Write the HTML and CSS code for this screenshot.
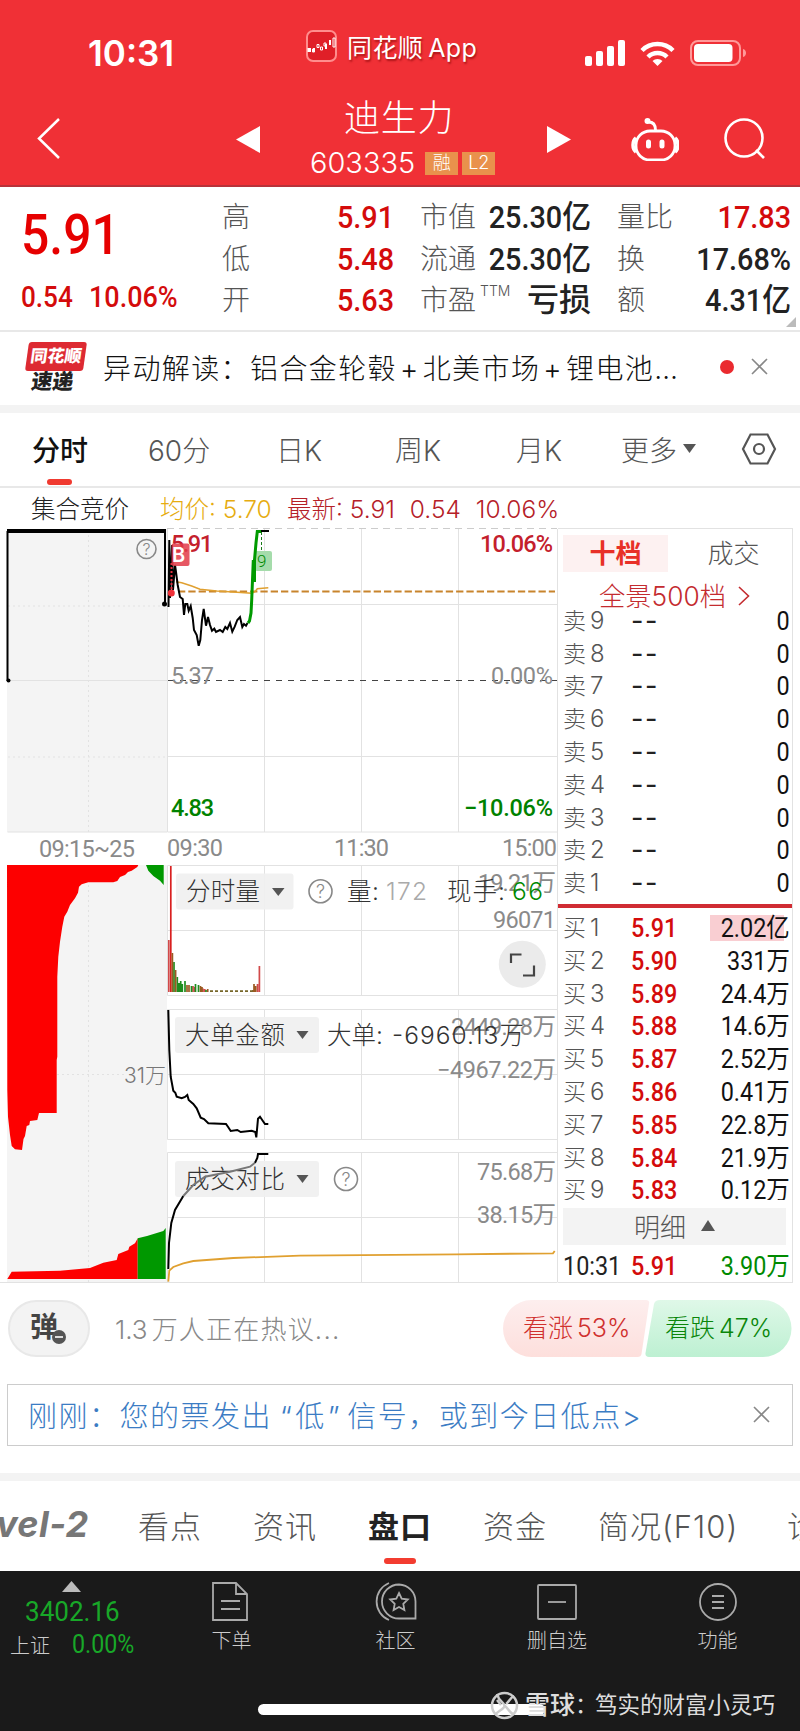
FILE: index.html
```
<!DOCTYPE html>
<html lang="zh-CN">

<head>
    <meta charset="utf-8">
    <title>迪生力 603335</title>
    <link rel="stylesheet" href="styles.css">
</head>

<body>
    <div class="header">
        <div class="status">
            <span class="time">10:31</span>
            <svg class="app-logo" width="32" height="32" viewBox="0 0 32 32">
                <rect x="1" y="1" width="29" height="30" rx="6" fill="#e01f28" stroke="#ff8d8d" stroke-width="2"/>
                <path d="M2.5 18v4M4 18v4M8 18v4M20 14v5M24 10v5" stroke="#fff" stroke-width="2"/>
                <path d="M6.500 19h2v3h-2zM11 14.500h2v3h-2zM14.500 17h2v3h-2zM18 13h2v3h-2zM27 8h2v9h-2z" stroke="#fff" fill="none"/>
            </svg>
            <span class="app-name">同花顺<span>App</span></span>
            <svg class="signals" width="164" height="30" viewBox="584 38 164 30">
                <g fill="#fff">
                    <rect x="585" y="56" width="7" height="10" rx="2"/>
                    <rect x="596" y="51" width="7" height="15" rx="2"/>
                    <rect x="607" y="46" width="7" height="20" rx="2"/>
                    <rect x="618" y="40" width="7" height="26" rx="2"/>
                    <path d="M657.500 66l-5-5a7 7 0 0 1 10 0z"/>
                </g>
                <g fill="none" stroke="#fff" stroke-width="4.500">
                    <path d="M642 50.500a22 22 0 0 1 31 0"/>
                    <path d="M648 57a13.500 13.500 0 0 1 19 0"/>
                </g>
                <rect x="691" y="41" width="49" height="24" rx="7" fill="none" stroke="#f99" stroke-width="2"/>
                <rect x="694" y="44" width="38.500" height="18" rx="4" fill="#fff"/>
                <path d="M743 49c4 1 4 7 0 8z" fill="#f99"/>
            </svg>
        </div>
        <div class="nav">
            <svg width="24" height="42" viewBox="0 0 24 42" fill="none" stroke="#fff" stroke-width="2.500"><path d="M22 1L2 20.500L22 40"/></svg>
            <svg width="24" height="27" viewBox="0 0 24 27" fill="#fff"><path d="M24 0v27L0 13.500z"/></svg>
            <div class="stock">
                <div class="stock-name">迪生力</div>
                <div class="stock-code">603335<i>融</i><i>L2</i></div>
            </div>
            <svg width="24" height="27" viewBox="0 0 24 27" fill="#fff"><path d="M0 0v27l24-13.500z"/></svg>
            <svg width="48" height="44" viewBox="630 118 48 44" fill="none" stroke="#fff" stroke-width="2.800">
                <rect x="635" y="132" width="39" height="29" rx="14"/>
                <path d="M654.500 131c0-5-2-8-7-8"/>
                <circle cx="646.500" cy="122" r="2" fill="#fff" stroke-width="2"/>
                <path d="M635 139c-4 3-4 11 0 14M674 139c4 3 4 11 0 14" stroke-width="3.500"/>
                <path d="M647.500 143v4M661 143v4" stroke-width="5" stroke-linecap="round"/>
            </svg>
            <svg width="42" height="42" viewBox="0 0 42 42" fill="none" stroke="#fff" stroke-width="2.600"><circle cx="20" cy="20" r="18.500"/><path d="M32 32l8 8"/></svg>
        </div>
    </div>

    <div class="quote">
        <div class="quote-main">
            <div class="price din">5.91</div>
            <div class="change"><span class="din">0.54</span><span class="din">10.06%</span></div>
        </div>
        <dl>
            <dt>高</dt><dd class="din red">5.91</dd>
            <dt>低</dt><dd class="din red">5.48</dd>
            <dt>开</dt><dd class="din red">5.63</dd>
        </dl>
        <dl>
            <dt>市值</dt><dd class="din">25.30亿</dd>
            <dt>流通</dt><dd class="din">25.30亿</dd>
            <dt>市盈<sup>TTM</sup></dt><dd>亏损</dd>
        </dl>
        <dl>
            <dt>量比</dt><dd class="din red">17.83</dd>
            <dt>换</dt><dd class="din">17.68%</dd>
            <dt>额</dt><dd class="din">4.31亿</dd>
        </dl>
        <b class="corner"></b>
    </div>

    <div class="news">
        <div class="news-logo"><b>同花顺</b><em>速递</em></div>
        <div class="news-text">异动解读：铝合金轮毂<s>+</s>北美市场<s>+</s>锂电池…</div>
        <b class="dot"></b>
        <svg class="close" width="17" height="17" viewBox="0 0 17 17"><path d="M1 1l15 15M16 1L1 16"/></svg>
    </div>

    <div class="periods">
        <span class="on">分时</span>
        <span>60分</span>
        <span>日K</span>
        <span>周K</span>
        <span>月K</span>
        <span>更多<svg width="13" height="9" viewBox="0 0 13 9"><path d="M0 0h13L6.500 9z" fill="#555"/></svg></span>
        <svg class="gear" width="36" height="32" viewBox="0 0 36 32" fill="none" stroke="#555" stroke-width="2.200"><path d="M9.500 1.500h17L34 16l-7.500 14.500h-17L2 16z"/><circle cx="18" cy="16" r="5"/></svg>
    </div>

    <div class="legend">
        <span>集合竞价</span>
        <span class="avg">均价: 5.70</span>
        <span class="last">最新: 5.91</span>
        <span class="last">0.54</span>
        <span class="last">10.06%</span>
    </div>

    <div class="board">
        <svg class="chart" width="558" height="755" viewBox="0 528 558 755">
            <!-- 集合竞价 -->
            <rect x="7" y="529" width="160" height="303" fill="#f4f4f4"/>
            <rect x="7" y="865" width="160" height="417" fill="#f4f4f4"/>
            <g class="grid" stroke-dasharray="2 3">
                <path d="M88.500 535V832M88.500 865V1282M8 606H167M8 757H167M57 1074.500H124"/>
            </g>
            <path class="grid" d="M8 680.500H167M7.500 832H167"/>
            <path d="M7.500 681V531" class="line"/>
            <path d="M7 531H166" stroke="#000" stroke-width="4"/>
            <path d="M165 531V604" class="line"/>
            <circle cx="164.500" cy="604" r="2.500"/>
            <circle cx="8.500" cy="680.500" r="2"/>
            <g class="help">
                <circle cx="146.500" cy="549" r="9.500"/>
                <text x="146.500" y="555" font-size="16">?</text>
            </g>
            <path fill="#fd0000" d="M7 865H138.300L137.300 867L131.700 870.700L128 872L125 875L120 877L117.300 881L113.300 882.300H88.300L81.700 884.300L79 886.700L78 892.700L75 898.300L70 905L67.300 911.700L64.300 916.700L62.300 926.700L60 941.700L58.300 956.700L57.300 976.700V1056.700L56.700 1060V1113H39L37.300 1120L30 1121L29.300 1125L26.700 1126L25 1136L23.500 1139L22 1150L15 1149.300L11.700 1146L10 1135L8 1116.700L7.300 1090z"/>
            <path fill="#009800" d="M146 865H163.700V885L160 880.700L153.300 876L148.300 870.700z"/>
            <path fill="#fd0000" d="M7.300 1279L11.700 1271.700L60 1270.700L90 1268L103.300 1262.700L116.700 1260L118.300 1254L128.300 1250L129.300 1246.700L135 1243.300L137.700 1238.300V1279z"/>
            <path fill="#009800" d="M137.700 1279V1238.300L147 1236L163.300 1231L165.700 1228V1279z"/>
            <text class="axis" x="124" y="1083" font-size="21" textLength="42">31万</text>

            <!-- 分时走势 -->
            <path class="grid" d="M167.500 529V832H557.500M167.500 604.500H557.500M167.500 756.500H557.500M264.500 529V832M361.500 529V832M458.500 529V832M557.500 529V1282"/>
            <path d="M167 528.500H557" stroke="#ccc" stroke-dasharray="7 5"/>
            <path d="M168 680.500H557" stroke="#444" stroke-dasharray="6 6"/>
            <path d="M178 591.500H555" stroke="#c8842c" stroke-width="1.800" stroke-dasharray="7.300 3"/>
            <text class="num r" x="171" y="552" textLength="42">5.91</text>
            <text class="num r end" x="553" y="552" textLength="73">10.06%</text>
            <text class="num g" x="171" y="816" textLength="43">4.83</text>
            <text class="num g end" x="553" y="816" textLength="89">−10.06%</text>
            <text class="num" x="171" y="684" textLength="43">5.37</text>
            <text class="num end" x="553" y="684" textLength="62">0.00%</text>
            <path fill="none" stroke="#e0a030" stroke-width="1.500" d="M176 581.700L181.700 582.700L191.700 586L200 589.300L216.700 591L233.300 592L251.700 593.300L255 591.700L257.300 588.700L268.300 587.700"/>
            <path class="line" d="M168.500 607L169.300 540L170 598L172 545L173 590L175 565L176 572L177.700 585L180 597L182.700 599L184 615L185.300 604H187.300L188.700 610.700L190.700 606L192.700 618L194 630L196.700 635L198.700 645.700L200.300 640L202 620L203.700 609L206 625.700L208 617L210 625L212 630.700L214.300 628.700L216 632L220 630L222.700 632L225.300 627L227.300 629L230 623L232.300 631.700L234.700 626.700L237.300 620L240 617L242.300 627L244 624L246 625.700L247.500 623"/>
            <path d="M257 531H269" class="line"/>
            <rect x="255" y="551" width="17" height="20" rx="2" fill="#a5dcab"/>
            <path d="M261.500 532V552" stroke="#187a18" stroke-dasharray="3 2"/>
            <path fill="none" stroke="#009a00" stroke-width="3" d="M248 623L249.500 621L251 613L251.700 600L253.300 560L254.500 582V560L256 543L257.300 531.500H261"/>
            <text x="257" y="567" class="tag" fill="#008a00">9</text>
            <path d="M171.500 563V590" stroke="#e03040" stroke-width="2" stroke-dasharray="2 2"/>
            <circle cx="171.300" cy="593" r="3.500" fill="#f03038"/>
            <rect x="171.500" y="543.500" width="18" height="22.500" rx="2" fill="#e23a48" fill-opacity=".85"/>
            <text x="172" y="562" font-size="20" font-weight="600" fill="#fff">B</text>
            <text class="num" x="39" y="857" textLength="96">09:15~25</text>
            <text class="num" x="167" y="856" textLength="56">09:30</text>
            <text class="num" x="334" y="856" textLength="55">11:30</text>
            <text class="num end" x="557" y="856" textLength="55">15:00</text>

            <!-- 分时量 -->
            <path class="grid" d="M167.500 995.500V865.500H557.500M167.500 930.500H557.500M167.500 995.500H557.500M264.500 865V995M361.500 865V995M458.500 865V995"/>
            <g stroke-width="1.700">
                <path stroke="#d14a4a" d="M168.800 992V940M193 992V986M194.800 992V987M203 992V988.500M204.800 992V989M257.500 992V984M259.400 992V966"/>
                <path stroke="#d81f1f" d="M170.800 992V866"/>
                <path stroke="#1f8e1f" d="M174 992V962M177.300 992V977M179 992V983M180.700 992V981M182.300 992V984M185 992V981M191.500 992V986M195.500 992V984M198.500 992V985M206 992V990"/>
                <path stroke="#9a5a22" d="M172.400 992V953M175.600 992V970M187 992V985M189 992V985M200.500 992V986M202 992V987M207.700 992V989M254 992V984M255.700 992V986M253 992V990"/>
                <path stroke="#77672a" d="M210 991.200H253" stroke-dasharray="3 2"/>
            </g>
            <text class="num end" x="556" y="891" textLength="78">19.21万</text>
            <text class="num end" x="556" y="928" textLength="63">96071</text>
            <rect class="btn" x="176" y="873.500" width="117.500" height="36" rx="3"/>
            <text class="name" x="186" y="900" textLength="74">分时量</text>
            <path d="M272 888h12.500l-6.250 8z" fill="#555"/>
            <g class="help">
                <circle cx="320.500" cy="891.300" r="11.500"/>
                <text x="320.500" y="898" font-size="18">?</text>
            </g>
            <text class="name" x="347" y="900" textLength="32">量:</text>
            <text class="name pale" x="386" y="900" textLength="41">172</text>
            <text class="name" x="447" y="900" textLength="58">现手:</text>
            <text class="name now" x="512" y="900" textLength="31">66</text>
            <circle cx="522.300" cy="964.300" r="23.500" fill="#ebebeb"/>
            <path d="M511 963V954.500H521.500M534 965.500V975.500H523" fill="none" stroke="#444" stroke-width="2.200"/>

            <!-- 大单金额 -->
            <path class="grid" d="M167.500 1139.500V1009.500H557.500M167.500 1074.500H557.500M167.500 1139.500H557.500M264.500 1009V1139M361.500 1009V1139M458.500 1009V1139"/>
            <text class="num end" x="556" y="1035" textLength="105">2449.28万</text>
            <text class="num end" x="556" y="1078" textLength="119">−4967.22万</text>
            <rect class="btn" x="175" y="1017" width="144" height="36" rx="3"/>
            <text class="name" x="185" y="1044" textLength="100">大单金额</text>
            <path d="M296.500 1031h12l-6 8z" fill="#555"/>
            <text class="name" x="327" y="1044" textLength="56">大单:</text>
            <text class="name" x="392" y="1044" textLength="132">-6960.13万</text>
            <path class="line" d="M168.300 1010L169.300 1050L170.700 1076.700L173.300 1090.700L175.300 1092.700L176.700 1096.700L181.700 1098.300L185 1097L187.300 1095L188.700 1100L193.300 1104L196.700 1108.300L200.700 1117.700L204 1119L208.300 1123.300L226 1124L228.300 1127.300L230.700 1131L237.300 1130L240.700 1132L251.700 1130.700L255.300 1132L256.300 1137.300L258 1118.700L260 1116.700L262.700 1120.700L265 1124H268.300"/>

            <!-- 成交对比 -->
            <path class="grid" d="M167.500 1282.500V1152.500H557.500M167.500 1217.500H557.500M0 1282.500H557.500M264.500 1152V1282M361.500 1152V1282M458.500 1152V1282"/>
            <text class="num end" x="556" y="1180" textLength="79">75.68万</text>
            <text class="num end" x="556" y="1223" textLength="79">38.15万</text>
            <rect class="btn" x="175" y="1161" width="144" height="36" rx="3"/>
            <text class="name" x="185" y="1188" textLength="100">成交对比</text>
            <path class="line" d="M168.300 1269L169 1243L171.300 1223L175 1210L183.300 1196"/>
            <path class="line faded" d="M183.300 1196L193.300 1185L205 1176.700L230 1171.700L250 1166.700L255 1162.700"/>
            <path class="line" d="M255 1162.700L257.300 1158L258 1154H268.300"/>
            <path d="M296.500 1175h12l-6 8z" fill="#555"/>
            <g class="help">
                <circle cx="346" cy="1179" r="11.500"/>
                <text x="346" y="1186" font-size="18">?</text>
            </g>
            <path fill="none" stroke="#e0a030" stroke-width="1.800" d="M168.300 1281.700L169.300 1270.700L173.300 1267L183.300 1263.300L193.300 1261L233.300 1258L300 1255.700L456 1254.300L553 1253.300L554.700 1251"/>
        </svg>

        <div class="book">
            <div class="book-tabs"><span class="on">十档</span><span>成交</span></div>
            <div class="book-full">全景500档<svg width="12" height="20" viewBox="0 0 12 20"><path d="M1 1l9.500 9L1 19" fill="none" stroke="#c42b2f" stroke-width="1.600"/></svg></div>
            <ul class="sell">
                <li><span>卖</span><span>9</span><b>--</b><em class="din">0</em></li>
                <li><span>卖</span><span>8</span><b>--</b><em class="din">0</em></li>
                <li><span>卖</span><span>7</span><b>--</b><em class="din">0</em></li>
                <li><span>卖</span><span>6</span><b>--</b><em class="din">0</em></li>
                <li><span>卖</span><span>5</span><b>--</b><em class="din">0</em></li>
                <li><span>卖</span><span>4</span><b>--</b><em class="din">0</em></li>
                <li><span>卖</span><span>3</span><b>--</b><em class="din">0</em></li>
                <li><span>卖</span><span>2</span><b>--</b><em class="din">0</em></li>
                <li><span>卖</span><span>1</span><b>--</b><em class="din">0</em></li>
            </ul>
            <ul class="buy">
                <li class="first"><span>买</span><span>1</span><b class="din">5.91</b><em class="din">2.02亿</em></li>
                <li><span>买</span><span>2</span><b class="din">5.90</b><em class="din">331万</em></li>
                <li><span>买</span><span>3</span><b class="din">5.89</b><em class="din">24.4万</em></li>
                <li><span>买</span><span>4</span><b class="din">5.88</b><em class="din">14.6万</em></li>
                <li><span>买</span><span>5</span><b class="din">5.87</b><em class="din">2.52万</em></li>
                <li><span>买</span><span>6</span><b class="din">5.86</b><em class="din">0.41万</em></li>
                <li><span>买</span><span>7</span><b class="din">5.85</b><em class="din">22.8万</em></li>
                <li><span>买</span><span>8</span><b class="din">5.84</b><em class="din">21.9万</em></li>
                <li><span>买</span><span>9</span><b class="din">5.83</b><em class="din">0.12万</em></li>
            </ul>
            <div class="detail">明细<svg width="14" height="11" viewBox="0 0 14 11"><path d="M0 11h14L7 0z" fill="#555"/></svg></div>
            <div class="trade"><span class="din">10:31</span><b class="din">5.91</b><em class="din">3.90万</em></div>
        </div>
    </div>

    <div class="talk">
        <div class="danmu">弹<svg width="16" height="16" viewBox="0 0 16 16"><circle cx="8" cy="8" r="7" fill="#555"/><path d="M4 8h8" stroke="#fff" stroke-width="1.600"/></svg></div>
        <div class="talk-text">1.3<span>万人正在热议...</span></div>
        <div class="vote">
            <svg width="289" height="58" viewBox="0 0 289 58">
                <defs>
                    <linearGradient id="up" x2="0" y2="1"><stop stop-color="#fdeeee"/><stop offset="1" stop-color="#fddfdc"/></linearGradient>
                    <linearGradient id="down" x2="0" y2="1"><stop stop-color="#dff8e8"/><stop offset="1" stop-color="#bdf0d2"/></linearGradient>
                </defs>
                <path d="M28.500 0H143q4 0 3 4L138.500 54q-.5 3-4 3H28.500a28.500 28.500 0 0 1 0-57z" fill="url(#up)"/>
                <path d="M157 0H260a28.500 28.500 0 0 1 0 57H146q-4 0-3.500-4L151 4q1-4 6-4z" fill="url(#down)"/>
            </svg>
            <span class="up">看涨<i>53%</i></span>
            <span class="down">看跌<i>47%</i></span>
        </div>
    </div>

    <div class="alert">
        <span>刚刚：您的票发出<q class="open">“</q>低<q>”</q>信号，或到今日低点&gt;</span>
        <svg class="close" width="17" height="17" viewBox="0 0 17 17"><path d="M1 1l15 15M16 1L1 16"/></svg>
    </div>

    <div class="sections">
        <span class="level">vel-2</span>
        <span>看点</span>
        <span>资讯</span>
        <span class="on">盘口</span>
        <span>资金</span>
        <span>简况(F10)</span>
        <span>诊</span>
    </div>

    <div class="footer">
        <div class="index">
            <svg width="19" height="11" viewBox="0 0 19 11"><path d="M0 11h19L9.500 0z" fill="#bbb"/></svg>
            <div class="index-num din">3402.16</div>
            <div class="index-name">上证<span class="din">0.00%</span></div>
        </div>
        <div class="tool order">
            <svg width="36" height="39" viewBox="0 0 36 39"><path d="M1 1h23l11 11v26H1zM24 1v11h11M9 19h19M9 27h19"/></svg>
            <span>下单</span>
        </div>
        <div class="tool">
            <svg width="42" height="39" viewBox="0 0 42 39"><path d="M24 2.500a17 17 0 1 0 0 34h16.500v-17A17 17 0 0 0 24 2.500zM14 1a20 20 0 0 0 0 37M24 11l2.700 5.700 6.100.8-4.500 4.300 1.100 6.200-5.400-3-5.400 3 1.100-6.200-4.500-4.300 6.100-.8z"/></svg>
            <span>社区</span>
        </div>
        <div class="tool remove">
            <svg width="40" height="39" viewBox="0 0 40 39"><rect x="1" y="3" width="38" height="34" rx="1"/><path d="M11 20h18"/></svg>
            <span>删自选</span>
        </div>
        <div class="tool">
            <svg width="38" height="39" viewBox="0 0 38 39"><circle cx="19" cy="20" r="18"/><path d="M13 14h12M13 20h12M13 26h12"/></svg>
            <span>功能</span>
        </div>
        <b class="home"></b>
        <div class="mark">
            <svg width="29" height="29" viewBox="0 0 29 29"><circle cx="14.500" cy="14.500" r="12.500"/><path d="M7 3c2 8 7 8 7.500 11.500S7 20 5 24M24 5c-4 2-5 6-8 8M15 15c3 2 4 6 8 8M7 9l4 5"/></svg>
            <span>雪球</span><span>：</span><span>笃实的财富小灵巧</span>
        </div>
    </div>
</body>

</html>
```

FILE: styles.css
```
* {
    box-sizing: border-box;
}

body {
    margin: 0;
    width: 800px;
    background: #fff;
    color: #222;
    font-family: Inter, "Noto Sans CJK SC", sans-serif;
    font-weight: 300;
    overflow-x: hidden;
}

ul,
dl,
dd {
    margin: 0;
    padding: 0;
    list-style: none;
}

i,
em {
    font-style: normal;
}

svg {
    display: block;
    flex: none;
}

/* 窄体数字 */
.din {
    font-family: Roboto, "Noto Sans CJK SC", sans-serif;
    font-weight: 500;
    display: inline-block;
    transform: scaleX(.9);
    transform-origin: left center;
    white-space: nowrap;
}

.red {
    color: #d40b0b;
}

.close {
    fill: none;
    stroke: #888;
    stroke-width: 1.6;
}

/* 顶部 */
.header {
    height: 187px;
    background: #f03036;
    border-bottom: 2px solid #b8323a;
    color: #fff;
}

.status {
    height: 92px;
    display: flex;
    align-items: center;
}

.time {
    flex: none;
    width: 219px;
    padding-left: 1px;
    margin-left: 87px;
    font-size: 35px;
    font-weight: 600;
    padding-top: 14px;
}

.app-name {
    flex: none;
    width: 246px;
    padding-left: 9px;
    font-size: 25px;
    letter-spacing: .4px;
    font-weight: 400;
    text-shadow: 1px 2px 2px rgba(120, 0, 0, .6);
}

.app-name span {
    margin-left: 5px;
}

.signals {
    margin-top: 14px;
}

.nav {
    height: 93px;
    display: grid;
    grid-template-columns: 199px 74px 237px 84px 93px 42px;
    align-items: center;
    padding: 0 0 0 37px;
}

.nav > svg {
    margin-bottom: 6px;
}

.stock {
    padding-bottom: 9px;
    white-space: nowrap;
}

.stock-name {
    font-size: 36px;
    line-height: 50px;
    letter-spacing: .8px;
    padding-left: 34px;
    padding-top: 1px;
}

.stock-code {
    display: flex;
    align-items: center;
    font-size: 29px;
    line-height: 40px;
}

.stock-code i {
    width: 33px;
    height: 23px;
    line-height: 22px;
    margin-left: 4px;
    background: #e9914c;
    font-size: 18px;
    text-align: center;
}

.stock-code i:first-of-type {
    margin-left: 10px;
}

/* 行情 */
.quote {
    position: relative;
    display: grid;
    grid-template-columns: 200px 172px 197px 200px;
    height: 145px;
    padding: 9px 0 0 22px;
    border-bottom: 2px solid #e8e8e8;
}

.quote-main {
    color: #d40b0b;
}

.price {
    margin-left: -1px;
    font-size: 56px;
    line-height: 78px;
    color: #e60000;
    transform: scaleX(.89);
}

.change {
    display: flex;
    margin-left: -1px;
    font-size: 29px;
    line-height: 46px;
}

.change span:first-child {
    width: 68px;
}

.change span:last-child {
    transform: scaleX(.93);
}

.quote dl {
    display: grid;
    grid-template-columns: 54px 1fr;
    grid-auto-rows: 41.5px;
    line-height: 42px;
}

.quote dt {
    font-size: 28px;
    color: #555;
    white-space: nowrap;
}

.quote dd {
    font-size: 32px;
    text-align: right;
    font-weight: 500;
    transform-origin: right center;
}

.quote sup {
    font-size: 14px;
    line-height: 0;
    vertical-align: 14px;
    margin-left: 4px;
}

.quote dl:nth-child(3),
.quote dl:nth-child(4) {
    padding-left: 26px;
}

.corner {
    position: absolute;
    right: 4px;
    bottom: 3px;
    border: 5px solid #bbb;
    border-top-color: transparent;
    border-left-color: transparent;
}

/* 速递 */
.news {
    display: flex;
    align-items: center;
    height: 81px;
    padding: 0 31px 4px 22px;
    border-bottom: 8px solid #f3f3f3;
}

.news-logo {
    width: 81px;
    display: flex;
    flex-direction: column;
    line-height: 20px;
    transform: skewX(-8deg);
    transform-origin: left bottom;
}

.news-logo b {
    width: 58px;
    height: 29px;
    line-height: 28px;
    border-radius: 3px;
    background: #dd2a32;
    color: #fff;
    font-size: 17px;
    font-weight: 900;
    text-align: center;
}

.news-logo em {
    padding: 1px 0 0 8px;
    font-size: 21px;
    font-weight: 900;
}

.news-text {
    width: 617px;
    font-size: 28px;
    letter-spacing: 1.4px;
    color: #111;
    white-space: nowrap;
}

.news-text s {
    text-decoration: none;
    margin: 0 3px;
}

.dot {
    width: 14px;
    height: 14px;
    border-radius: 50%;
    background: #ea2a2f;
    margin-right: 17px;
}

/* 周期 */
.periods {
    display: flex;
    align-items: center;
    height: 75px;
    padding: 0 0 2px 32px;
    border-bottom: 2px solid #e8e8e8;
    font-size: 28px;
    color: #555;
}

.periods span {
    display: flex;
    align-items: center;
    white-space: nowrap;
    width: 119px;
    height: 71px;
}

.periods span:nth-child(1) {
    width: 116px;
}

.periods span:nth-child(2) {
    width: 128px;
}

.periods span:nth-child(4) {
    width: 121px;
}

.periods span:nth-child(5) {
    width: 105px;
}

.periods span:nth-child(6) {
    width: 120px;
}

.periods span svg {
    margin-left: 6px;
}

.periods .on {
    position: relative;
    font-weight: 500;
    color: #111;
}

.periods .on::after {
    content: "";
    position: absolute;
    left: 15px;
    bottom: -1px;
    width: 25px;
    height: 6px;
    border-radius: 3px;
    background: #f03a30;
}

.legend {
    display: flex;
    height: 40px;
    padding: 0 0 0 31px;
    line-height: 42px;
    font-size: 24.5px;
    white-space: nowrap;
}

.legend span {
    width: 129px;
}

.legend .avg {
    width: 127px;
    color: #e6ac10;
}

.legend .last {
    width: auto;
    margin-right: 15px;
    color: #b52028;
}

/* 图表 */
.board {
    display: flex;
}

.grid {
    fill: none;
    stroke: #e2e2e2;
}

.line {
    fill: none;
    stroke: #000;
    stroke-width: 2;
}

.faded {
    stroke: #777;
}

.num {
    font-family: Roboto, "Noto Sans CJK SC", sans-serif;
    font-size: 23.5px;
    font-weight: 400;
    fill: #8a8a8a;
}

.num.r {
    fill: #c4202c;
    font-weight: 500;
}

.num.g {
    fill: #008200;
    font-weight: 500;
}

.end {
    text-anchor: end;
}

.axis {
    fill: #777;
}

.tag {
    font-family: Roboto, sans-serif;
    font-size: 17px;
}

.btn {
    fill: #f0f0f0;
    fill-opacity: .93;
}

.name {
    font-size: 24.5px;
    fill: #333;
}

.pale {
    fill: #aaa;
}

.now {
    fill: #008a00;
}

.help circle {
    fill: none;
    stroke: #888;
    stroke-width: 1.6;
}

.help text {
    fill: #888;
    text-anchor: middle;
}

.book {
    width: 235px;
    height: 755px;
    padding: 6px 5px 0 5px;
    border: 1px solid #e2e2e2;
    border-left: 0;
}

.book-tabs {
    display: flex;
    height: 37px;
    line-height: 37px;
    font-size: 26px;
    color: #555;
    text-align: center;
}

.book-tabs span {
    flex: none;
    width: 105px;
    margin-right: 13px;
}

.book-tabs .on {
    background: #fdf1f1;
    color: #e83028;
    font-weight: 700;
}

.book-full {
    display: flex;
    align-items: center;
    height: 37px;
    padding: 7px 0 0 36px;
    font-size: 26.3px;
    color: #c42b2f;
}

.book-full svg {
    margin: 3px 0 0 12px;
}

.book ul {
    display: flex;
    flex-direction: column;
    height: 291px;
    margin: 0 -5px;
    padding-left: 5px;
    overflow: hidden;
}

.book li {
    flex: none;
    display: grid;
    grid-template-columns: 27px 41px 50px 109px;
    align-items: center;
    height: 32.8px;
    line-height: 32.8px;
    font-size: 24px;
    color: #555;
}

.book li span:first-child {
    font-size: 23px;
}

.book li b {
    font-size: 26px;
    font-weight: 500;
    color: #d40b0b;
}

.book li em {
    justify-self: end;
    font-size: 26px;
    font-weight: 400;
    color: #111;
    transform-origin: right center;
}

.book .sell {
    justify-content: flex-end;
}

.book .sell b {
    color: #222;
    font-size: 27px;
    font-weight: 400;
    letter-spacing: 1.5px;
}

.book .buy {
    height: 296px;
    margin-top: 4px;
    padding-top: 4px;
    border-top: 4px solid #d02c33;
    margin-bottom: 8px;
}

.book .first {
    background: linear-gradient(#f9ced2, #f9ced2) no-repeat 147px 3px / 74px 26px;
}

.detail {
    display: flex;
    align-items: center;
    justify-content: center;
    width: 223px;
    height: 37px;
    background: #f3f3f3;
    font-size: 26px;
    color: #555;
    padding-bottom: 2px;
}

.detail svg {
    margin-left: 15px;
}

.trade {
    display: grid;
    grid-template-columns: 68px 50px 109px;
    line-height: 43px;
    font-size: 26px;
}

.trade .din {
    font-weight: 400;
}

.trade b.din {
    font-weight: 500;
    color: #d40b0b;
}

.trade em {
    justify-self: end;
    color: #008a00;
    transform-origin: right center;
}

/* 热议 */
.talk {
    display: flex;
    align-items: center;
    height: 57px;
    margin-top: 17px;
    padding-left: 8px;
}

.danmu {
    display: flex;
    width: 82px;
    height: 57px;
    padding-left: 20px;
    border: 2px solid #e8e8e8;
    border-radius: 29px;
    background: #f3f3f3;
    font-size: 28px;
    line-height: 50px;
    font-weight: 700;
    color: #444;
}

.danmu svg {
    margin: 27px 0 0 -7px;
}

.talk-text {
    width: 413px;
    padding: 0 0 3px 25px;
    font-size: 26px;
    color: #888;
}

.talk-text span {
    margin-left: 4px;
    letter-spacing: 1.2px;
}

.vote {
    position: relative;
}

.vote span {
    position: absolute;
    top: 0;
    line-height: 57px;
    font-size: 25px;
    white-space: nowrap;
}

.vote i {
    margin-left: 4px;
}

.up {
    left: 20px;
    color: #d0302e;
}

.down {
    left: 162px;
    color: #0a860a;
}

.alert {
    display: flex;
    align-items: center;
    justify-content: space-between;
    width: 786px;
    height: 62px;
    margin: 27px 0 27px 7px;
    padding: 0 22px 2px 20px;
    border: 1px solid #ccc;
    font-size: 29px;
    letter-spacing: 1.5px;
    color: #3b7cc4;
    white-space: nowrap;
}

.alert q {
    quotes: none;
    margin: 0 6px 0 2px;
}

.alert .open {
    margin: 0 2px 0 8px;
}

.alert svg {
    margin-left: 2px;
}

/* 底部栏目 */
.sections {
    position: relative;
    display: flex;
    align-items: center;
    height: 98px;
    padding-bottom: 4px;
    border-top: 8px solid #f3f3f3;
    font-size: 31px;
    letter-spacing: 1px;
    color: #555;
    white-space: nowrap;
    overflow: hidden;
}

.sections span {
    width: 115px;
    flex: none;
}

.sections .level {
    width: 138px;
    text-indent: -4px;
    font-size: 36px;
    font-weight: 700;
    font-style: italic;
    letter-spacing: .4px;
    color: #777;
}

.sections span:nth-child(6) {
    width: 189px;
}

.sections .on {
    font-weight: 700;
    color: #222;
}

.sections .on::after {
    content: "";
    position: absolute;
    left: 384px;
    bottom: 7px;
    width: 32px;
    height: 6px;
    border-radius: 3px;
    background: #f33c30;
}

.footer {
    position: relative;
    display: grid;
    grid-template-columns: 150px 163px 165px 161px 157px;
    height: 160px;
    background: #1a1a1a;
    color: #ccc;
    font-size: 20px;
}

.index svg {
    margin: 10px 0 0 62px;
}

.index-num {
    margin-left: 25px;
    font-size: 28px;
    line-height: 40px;
    font-weight: 400;
    color: #18a828;
    transform: scaleX(.93);
}

.index-name {
    padding-left: 10px;
    line-height: 26px;
    white-space: nowrap;
}

.index-name span {
    margin-left: 22px;
    font-size: 25px;
    font-weight: 400;
    color: #18a828;
    transform: scaleX(.93);
}

.tool {
    display: flex;
    flex-direction: column;
    align-items: center;
    padding-top: 11px;
}

.tool svg {
    fill: none;
    stroke: #aaa;
    stroke-width: 1.8;
}

.order svg,
.remove svg {
    margin-right: 4px;
}

.remove span {
    margin-right: 3px;
}

.tool span {
    line-height: 40px;
}

.home {
    position: absolute;
    left: 258px;
    top: 133px;
    width: 287px;
    height: 11px;
    border-radius: 6px;
    background: #fff;
}

.mark {
    position: absolute;
    left: 490px;
    top: 119px;
    display: flex;
    align-items: center;
    font-size: 22.5px;
    line-height: 30px;
    font-weight: 400;
    color: #ddd;
    white-space: nowrap;
}

.mark svg {
    margin-right: 6px;
    fill: none;
    stroke: #ccc;
    stroke-width: 2.5;
}

.mark span:nth-of-type(1) {
    font-size: 25px;
    font-weight: 500;
}

.mark span:nth-of-type(2) {
    width: 20px;
}
```
